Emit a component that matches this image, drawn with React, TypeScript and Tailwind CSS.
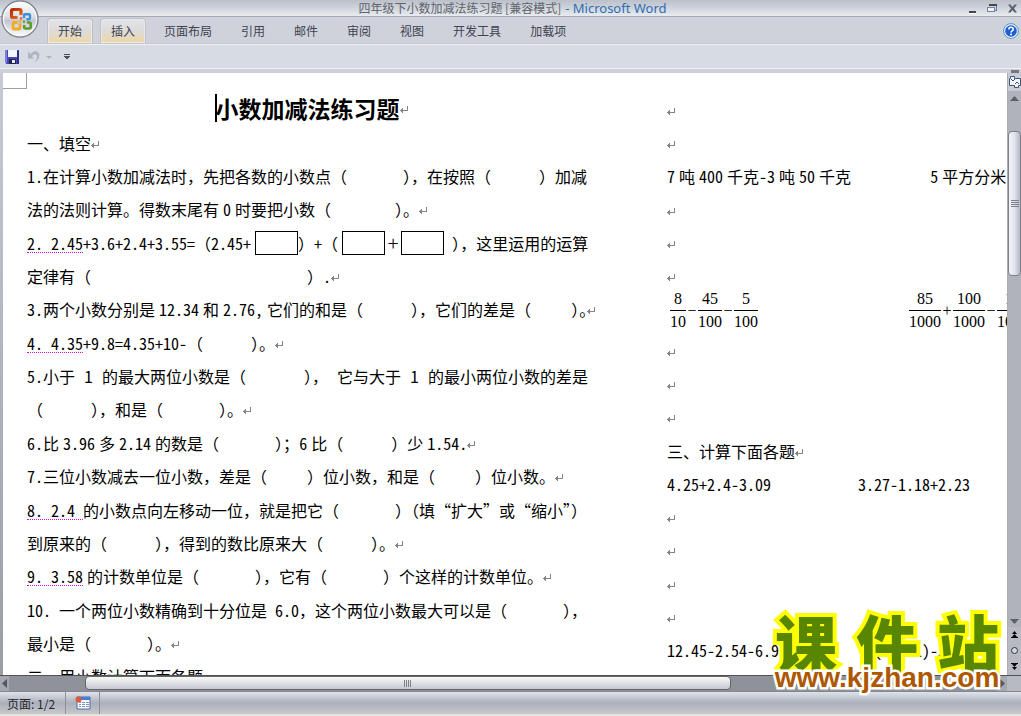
import React, { Children, type ReactNode } from 'react';

const tabs = [
  { label: '开始', lit: true },
  { label: '插入', lit: true },
  { label: '页面布局' },
  { label: '引用' },
  { label: '邮件' },
  { label: '审阅' },
  { label: '视图' },
  { label: '开发工具' },
  { label: '加载项' },
];

function Mark() {
  return (
    <svg className="mt-1 inline-block h-2 w-2 shrink-0" viewBox="0 0 8 8" aria-hidden="true" shapeRendering="crispEdges">
      <path d="M7 0h1v5H3v2H2V6H1V5H0V4h1V3h1V2h1v2h4z" fill="#858585" />
    </svg>
  );
}

/* Sets the Latin runs of a string with the half-width figures of the font */
function T({ children }: { children: string }) {
  const runs = children.match(/[ -~]+|[^ -~]+/g) ?? [];
  return (
    <span className="flex shrink-0">
      {runs.map((run, i) => (
        <span key={i} className={/^[ -~]/.test(run) ? "[font-feature-settings:'hwid']" : ''}>
          {run}
        </span>
      ))}
    </span>
  );
}

function Line({ children, end, spread }: { children?: ReactNode; end?: boolean; spread?: boolean }) {
  return (
    <div className={spread ? 'flex items-center justify-between whitespace-pre' : 'flex items-center whitespace-pre'}>
      {Children.map(children, (c) => (typeof c === 'string' ? <T>{c}</T> : c))}
      {end && <Mark />}
    </div>
  );
}

/* Latin run set between Chinese characters, with the quarter-em space on both sides */
function N({ children }: { children: ReactNode }) {
  return <span className="mx-1 [font-feature-settings:'hwid']">{children}</span>;
}

/* closing punctuation set on half of its full width */
function R({ children = '）' }: { children?: string }) {
  return <span className="shrink-0 [font-feature-settings:'halt']">{children}</span>;
}

function Flag({ children }: { children: ReactNode }) {
  return (
    <span className="relative [font-feature-settings:'hwid']">
      {children}
      <span className="absolute inset-x-0 bottom-0.5 border-b border-dotted border-[#d010d0]" />
    </span>
  );
}

const Q = () => <span className="w-1 shrink-0" />;
const B40 = () => <span className="w-10 shrink-0" />;
const B48 = () => <span className="w-12 shrink-0" />;
const B56 = () => <span className="w-14 shrink-0" />;
const B64 = () => <span className="w-16 shrink-0" />;
const Box = () => <span className="h-6 w-[43px] shrink-0 border border-black bg-white" />;

function Frac({ top, bottom }: { top: string; bottom: string }) {
  return (
    <span className="flex flex-col text-center font-['Liberation_Serif',serif] text-[16px] leading-[22px]">
      <span className="border-b border-black">{top}</span>
      <span>{bottom}</span>
    </span>
  );
}

function Op({ children }: { children: ReactNode }) {
  return <span className="w-3 text-center font-['Liberation_Serif',serif] leading-4">{children}</span>;
}

function OfficeOrb() {
  return (
    <svg viewBox="0 0 38 38" className="h-[38px] w-[38px]" aria-hidden="true">
      <defs>
        <linearGradient id="orb" x1="0" y1="0" x2="0" y2="1">
          <stop offset="0" stopColor="#ffffff" />
          <stop offset="0.45" stopColor="#dcdfe5" />
          <stop offset="0.55" stopColor="#c3c6ce" />
          <stop offset="1" stopColor="#ffffff" />
        </linearGradient>
        <linearGradient id="red" x1="0" y1="0" x2="1" y2="1">
          <stop offset="0" stopColor="#b52a05" />
          <stop offset="1" stopColor="#f26a1c" />
        </linearGradient>
      </defs>
      <circle cx="19" cy="19" r="18" fill="url(#orb)" stroke="#7f848d" strokeWidth="1.4" />
      <circle cx="19" cy="19" r="16.6" fill="none" stroke="#f7f8fa" strokeWidth="1.2" />
      <path d="M16.500 17.500H12q-1.500 0-1.500-1.500v-5q0-1.500 1.500-1.500h6.500q1.500 0 1.500 1.500v4" fill="none" stroke="url(#red)" strokeWidth="3.200" />
      <path d="M23 18v-2.500q0-1.200 1.200-1.200h3.600q1.200 0 1.200 1.200v2.500q0 1.200-1.200 1.200h-2.300" fill="none" stroke="#3c8fd8" strokeWidth="2.400" />
      <path d="M19 23.500v4q0 1.500-1.500 1.500h-4q-1.500 0-1.500-1.500v-3.500q0-1.500 1.500-1.500h3" fill="none" stroke="#f2ab22" strokeWidth="2.800" />
      <path d="M26 22.500h2.500q1.200 0 1.200 1.200v3.300q0 1.500-1.500 1.500h-3.500q-1.500 0-1.500-1.500v-2" fill="none" stroke="#5e9c2f" strokeWidth="2.600" />
      <path d="M19 17.300h2.200v2.200H19z" fill="#e8601c" />
      <path d="M18 20.500h2v2h-2z" fill="#f2ab22" />
      <path d="M22 20.800h2v2h-2z" fill="#5e9c2f" />
    </svg>
  );
}

function TitleBar() {
  return (
    <header className="flex h-[17px] items-center border-b border-[#a4a9b5] bg-gradient-to-b from-[#bcc0ca] via-[#cfd3db] to-[#e9edf1]">
      <h1 className="flex flex-1 justify-center gap-1 pl-1 text-[12px] leading-4 text-[#5f636b]">
        <span>四年级下小数加减法练习题 [兼容模式]</span>
        <span className="font-['Noto_Sans',sans-serif] text-[13px] text-[#2f6db3]">- Microsoft Word</span>
      </h1>
      <div className="absolute top-0 right-0 flex h-4 items-center gap-2 pr-0.5">
        <button type="button" aria-label="最小化" className="mr-0.5 flex h-3 w-2 items-end">
          <span className="h-[3px] w-[7px] border-b border-white bg-[#43474e]" />
        </button>
        <button type="button" aria-label="还原" className="flex h-3 w-3 items-center">
          <svg viewBox="0 0 10 9" className="h-[9px] w-[10px]" aria-hidden="true" shapeRendering="crispEdges">
            <path d="M2 1h7v5H7" fill="none" stroke="#6b7a90" />
            <path d="M2 0h8v2H2z" fill="#43474e" />
            <path d="M0.500 3.500h7v4h-7z" fill="#eef1f5" stroke="#7386a0" />
          </svg>
        </button>
        <button type="button" aria-label="关闭" className="flex h-3 w-3 items-center">
          <svg viewBox="0 0 11 9" className="h-[9px] w-[11px]" aria-hidden="true">
            <path d="M1 0.500h2.500L5.500 3 7.500 0.500H10L7 4.500l3 4H7.500L5.500 6l-2 2.500H1l3-4z" fill="#59616e" />
          </svg>
        </button>
      </div>
    </header>
  );
}

function TabBar() {
  return (
    <nav className="flex h-[27px] items-end gap-[7px] border-b border-[#c2c6cf] bg-[#cfd2db] pl-[47px]">
      {tabs.map((t) => (
        <button
          key={t.label}
          type="button"
          className={
            t.lit
              ? 'h-[25px] rounded-t border border-b-0 border-[#bcc0c9] bg-gradient-to-b from-[#e2e4ea] via-[#dddbd9] to-[#f0d7a2] px-[10px] text-[12px] leading-6 text-[#3d4350] shadow-[inset_0_0_0_1px_#ece9e4]'
              : 'h-[25px] px-[11px] text-[12px] leading-6 text-[#3d4350]'
          }
        >
          {t.label}
        </button>
      ))}
      <button type="button" aria-label="帮助" className="mr-0.5 mb-1 ml-auto h-4 w-4">
        <svg viewBox="0 0 16 16" className="h-4 w-4" aria-hidden="true">
          <circle cx="8" cy="8" r="7.400" fill="#e8f1fb" stroke="#5b93cf" />
          <circle cx="8" cy="8" r="5.800" fill="#1d5fd0" />
          <path d="M5.800 6.500q0-2.200 2.200-2.200t2.200 1.900q0 1.300-1.300 1.900-.8.400-.8 1.300" fill="none" stroke="#fff" strokeWidth="1.600" />
          <path d="M7.200 10.600h1.700v1.600H7.200z" fill="#fff" />
        </svg>
      </button>
    </nav>
  );
}

function QuickAccess() {
  return (
    <div className="flex h-[25px] items-center border-t border-b border-t-[#eef0f4] border-b-[#eef0f4] bg-[#d7dbe4] pl-[5px]">
      <button type="button" aria-label="保存" className="h-[14px] w-[14px]">
        <svg viewBox="0 0 14 14" className="h-[14px] w-[14px]" aria-hidden="true" shapeRendering="crispEdges">
          <path d="M0 0h14v14H1l-1-1z" fill="#4547b5" />
          <path d="M0 0h2v13H0z" fill="#7c7fdc" />
          <path d="M12 1h2v13h-2z" fill="#2c2d83" />
          <path d="M3 0h9v7H3z" fill="#f4f6fd" />
          <path d="M4 9h7v5H4z" fill="#23234f" />
          <path d="M7 10h3v3H7z" fill="#e8e8f0" />
        </svg>
      </button>
      <button type="button" aria-label="撤消" className="ml-2 h-[14px] w-[14px]">
        <svg viewBox="0 0 14 14" className="h-[14px] w-[14px]" aria-hidden="true">
          <path d="M1 1.500v7h6L4.800 6.200q3-3 4.800-1.200 1.800 3-2.600 7.500 5.500-3 5.400-7.500Q11.500 1 8 1.300 5.500 1.700 3.300 4z" fill="#b1b4be" />
        </svg>
      </button>
      <button type="button" aria-label="撤消选项" className="ml-1 h-3 w-2">
        <svg viewBox="0 0 8 12" className="h-3 w-2" aria-hidden="true">
          <path d="M1 5h6L4 8z" fill="#b1b4be" />
        </svg>
      </button>
      <button type="button" aria-label="自定义快速访问工具栏" className="ml-2.5 h-3 w-2">
        <svg viewBox="0 0 8 12" className="h-3 w-2" aria-hidden="true" shapeRendering="crispEdges">
          <path d="M1 3h6v1H1zM1 5h6v1H6v1H5v1H3V7H2V6H1z" fill="#4a4e57" />
        </svg>
      </button>
    </div>
  );
}

function LeftColumn() {
  return (
    <section className="w-[561px] shrink-0">
      <h2 className="flex h-[53px] items-center justify-center pt-4 pl-2 text-[23px] leading-7 font-bold">
        <span className="relative">
          <span className="absolute top-0 -left-px h-7 w-0.5 bg-black" />
          小数加减法练习题
        </span>
        <Mark />
      </h2>
      <div className="grid h-[567px] grid-cols-1 grid-rows-[repeat(17,minmax(0,1fr))]">
        <Line end>一、填空</Line>
        <Line>1.在计算小数加减法时，先把各数的小数点（<B56 /><R />，在按照（<B48 />）加减</Line>
        <Line end>法的法则计算。得数末尾有<N>0</N>时要把小数（<B64 /><R />。</Line>
        <Line>
          <Flag>2. 2.45</Flag>+3.6+2.4+3.55=（2.45+<Q /><Box />）+（<Q /><Box />
          <span className="w-4 shrink-0 text-center text-[20px] font-light">+</span><Box /><span className="w-2 shrink-0" /><R />，这里运用的运算
        </Line>
        <Line end>定律有（<span className="w-54 shrink-0" />）.</Line>
        <Line end>
          3.两个小数分别是<N>12.34</N>和<N>2.76,</N>它们的和是（<B48 /><R />，它们的差是（<B40 /><R>）。</R>
        </Line>
        <Line end><Flag>4. 4.35</Flag>+9.8=4.35+10-（<B48 /><R />。</Line>
        <Line spread>
          5.小于<span>1</span>的最大两位小数是（<B40 />
          <span className="flex"><R />，</span>它与大于<span>1</span>的最小两位小数的差是
        </Line>
        <Line end>（<B48 /><R />，和是（<B56 /><R />。</Line>
        <Line end>
          6.比<N>3.96</N>多<N>2.14</N>的数是（<B56 /><R />；6<Q />比（<B48 />）少<Q />1.54.
        </Line>
        <Line end>7.三位小数减去一位小数，差是（<B40 />）位小数，和是（<B40 />）位小数。</Line>
        <Line><Flag>8. 2.4 </Flag>的小数点向左移动一位，就是把它（<B56 /><R />（填“扩大”或“缩小”）</Line>
        <Line end>到原来的（<B48 /><R />，得到的数比原来大（<B48 /><R />。</Line>
        <Line end>
          <Flag>9. 3.58</Flag><Q />的计数单位是（<B56 /><R />，它有（<B56 />）个这样的计数单位。
        </Line>
        <Line>10. 一个两位小数精确到十分位是 6.0，这个两位小数最大可以是（<B56 /><R />，</Line>
        <Line end>最小是（<B56 /><R />。</Line>
        <Line>二、用小数计算下面各题</Line>
      </div>
    </section>
  );
}

function RightColumn() {
  return (
    <section className="ml-[79px] shrink-0 pt-5">
      <div className="grid h-[200px] grid-rows-6">
        <Line end />
        <Line end />
        <Line>
          7<N>吨</N>400<Q />千克-3<N>吨</N>50<N>千克</N>
          <span className="w-[75px]" />5<N>平方分米</N>
        </Line>
        <Line end />
        <Line end />
        <Line end />
      </div>
      <div className="flex h-[41px] items-center pb-1.5 pl-[3px]">
        <Frac top="8" bottom="10" />
        <Op>−</Op>
        <Frac top="45" bottom="100" />
        <Op>−</Op>
        <Frac top="5" bottom="100" />
        <span className="w-[151px]" />
        <Frac top="85" bottom="1000" />
        <Op>+</Op>
        <Frac top="100" bottom="1000" />
        <Op>−</Op>
        <Frac top="15" bottom="1000" />
      </div>
      <div className="grid h-[333px] grid-rows-10">
        <Line end />
        <Line end />
        <Line end />
        <Line end>三、计算下面各题</Line>
        <Line>4.25+2.4-3.09<span className="w-[87px]" />3.27-1.18+2.23</Line>
        <Line end />
        <Line end />
        <Line end />
        <Line end />
        <Line>12.45-2.54-6.9<span className="w-[95px]" />(8+2.1)-3.6.</Line>
      </div>
    </section>
  );
}

function VerticalScroll() {
  return (
    <aside className="flex w-[14px] shrink-0 flex-col border-l border-[#a9acb3] bg-[#b0b3bc]">
      <button type="button" aria-label="标尺" className="flex h-[18px] items-center justify-center border-b border-[#c7cad1] bg-[#c9ccd4]">
        <svg viewBox="0 0 12 12" className="h-3 w-3" aria-hidden="true">
          <path d="M0.500 2.500h1v-2h4v2h6v7h-2v2h-4v-2h-5z" fill="#f3f4f8" stroke="#3f5878" />
          <path d="M2 3l2 2 2-2M6 8l2-2 2 2" fill="none" stroke="#3f5878" />
        </svg>
      </button>
      <button type="button" aria-label="向上滚动" className="flex h-10 justify-center pt-[5px]">
        <svg viewBox="0 0 9 5" className="h-[5px] w-[9px]" aria-hidden="true"><path d="M0 5 4.500 0 9 5z" fill="#5b5f67" /></svg>
      </button>
      <div className="flex h-[145px] flex-col items-center justify-center gap-px rounded-sm border border-[#7c8088] bg-gradient-to-r from-[#f3f5fa] via-[#dfe3ee] to-[#b6bac4]">
        <span className="h-px w-2 bg-[#7c8088]" />
        <span className="h-px w-2 bg-[#7c8088]" />
        <span className="h-px w-2 bg-[#7c8088]" />
        <span className="h-px w-2 bg-[#7c8088]" />
      </div>
      <div className="flex-1" />
      <button type="button" aria-label="向下滚动" className="flex h-3 justify-center pt-1">
        <svg viewBox="0 0 9 5" className="h-[5px] w-[9px]" aria-hidden="true"><path d="M0 0h9L4.500 5z" fill="#5b5f67" /></svg>
      </button>
      <div className="flex h-12 flex-col items-center gap-[9px] bg-[#b7bac3] pt-1">
        <button type="button" aria-label="前一页">
          <svg viewBox="0 0 7 7" className="h-[7px] w-[7px]" aria-hidden="true"><path d="M3.500 0 6 3H1zM3.500 3 6 6H1zM0 6h7v1H0z" fill="#000" /></svg>
        </button>
        <button type="button" aria-label="选择浏览对象" className="h-[7px] w-[7px] rounded-full border border-[#30343a] bg-[#d5d8df]" />
        <button type="button" aria-label="下一页">
          <svg viewBox="0 0 7 7" className="h-[7px] w-[7px]" aria-hidden="true"><path d="M0 0h7v1H0zM1 1h5L3.500 4zM1 4h5L3.500 7z" fill="#000" /></svg>
        </button>
      </div>
    </aside>
  );
}

function HorizontalScroll() {
  return (
    <div className="flex h-4 items-stretch border-t border-[#4f5257] bg-[#8f9298]">
      <button type="button" aria-label="向左滚动" className="flex w-[9px] items-center justify-center bg-[#a5a8ae]">
        <svg viewBox="0 0 5 9" className="h-[9px] w-[5px]" aria-hidden="true"><path d="M5 0v9L0 4.500z" fill="#54575d" /></svg>
      </button>
      <div className="w-[76px]" />
      <div className="mb-px flex flex-[645] items-center justify-center gap-px rounded-sm border border-[#62656b] bg-gradient-to-b from-[#fcfbf0] via-[#dfe1e8] to-[#c6c9d3]">
        <span className="h-[7px] w-px bg-[#7c8088]" />
        <span className="h-[7px] w-px bg-[#7c8088]" />
        <span className="h-[7px] w-px bg-[#7c8088]" />
        <span className="h-[7px] w-px bg-[#7c8088]" />
      </div>
      <div className="flex-[267]" />
      <button type="button" aria-label="向右滚动" className="flex w-[10px] items-center justify-center bg-[#a5a8ae]">
        <svg viewBox="0 0 5 9" className="h-[9px] w-[5px]" aria-hidden="true"><path d="M0 0v9l5-4.500z" fill="#54575d" /></svg>
      </button>
      <div className="w-[14px] bg-[#b7bac3]" />
    </div>
  );
}

function StatusBar() {
  return (
    <footer className="flex h-[25px] items-stretch border-t border-b-2 border-t-[#84878e] border-b-[#e4e4de] bg-gradient-to-b from-[#dfe3ea] via-[#abafba] to-[#c9c9cc] text-[12px] leading-[21px] text-[#23262c]">
      <button type="button" className="w-[66px] border-r border-[#8d9097] pl-[7px] text-left">页面: 1/2</button>
      <button type="button" aria-label="宏" className="flex w-[34px] items-center justify-center border-r border-[#8d9097]">
        <svg viewBox="0 0 16 14" className="h-[14px] w-4" aria-hidden="true">
          <path d="M2 1h13v12H2z" fill="#fdfdfe" stroke="#4a6da8" />
          <path d="M2 1h13v3H2z" fill="#4b7ad2" />
          <path d="M4 6h2v1H4zM7 6h3v1H7zM11 6h3v1h-3zM4 8h2v1H4zM7 8h3v1H7zM11 8h3v1h-3zM4 10h2v1H4zM7 10h3v1H7zM11 10h3v1h-3z" fill="#7d95bf" />
          <circle cx="3.500" cy="3.500" r="3" fill="#dc5a35" />
        </svg>
      </button>
    </footer>
  );
}

export default function App() {
  return (
    <div className="relative flex h-screen flex-col overflow-hidden bg-[#cdd0d9] font-['Noto_Sans_CJK_SC',sans-serif]" lang="zh-CN">
      <TitleBar />
      <TabBar />
      <QuickAccess />
      <button type="button" aria-label="Office 按钮" className="absolute top-0 left-px">
        <OfficeOrb />
      </button>
      <div className="flex h-1 shrink-0 justify-end">
        <span className="mr-0.5 h-[3px] w-2 self-center bg-[#74777e]" />
      </div>
      <div className="flex min-h-0 flex-1">
        <div className="w-[3px] shrink-0 bg-gradient-to-b from-[#c6cad5] to-[#9a9da4]" />
        <main className="relative flex min-w-0 flex-1 overflow-hidden bg-white pl-6 text-[16px] leading-6 text-black">
          <span className="absolute top-0 left-0 h-4 w-6 border-r border-b border-[#a0a0a0]" />
          <LeftColumn />
          <RightColumn />
        </main>
        <VerticalScroll />
      </div>
      <HorizontalScroll />
      <StatusBar />
      <div className="absolute right-[22px] bottom-[22px] flex w-[224px] flex-col items-center">
        <div className="flex w-full justify-between text-[62px] leading-[42px] font-black text-[#588600] [-webkit-text-stroke:8px_#ffff00] [paint-order:stroke]">
          <span>课</span>
          <span>件</span>
          <span>站</span>
        </div>
        <a
          href="http://www.kjzhan.com"
          className="font-['Liberation_Sans',sans-serif] text-[28px] leading-8 font-bold text-[#ad5800] [-webkit-text-stroke:5px_#ffffff] [paint-order:stroke]"
        >
          www.kjzhan.com
        </a>
      </div>
    </div>
  );
}
